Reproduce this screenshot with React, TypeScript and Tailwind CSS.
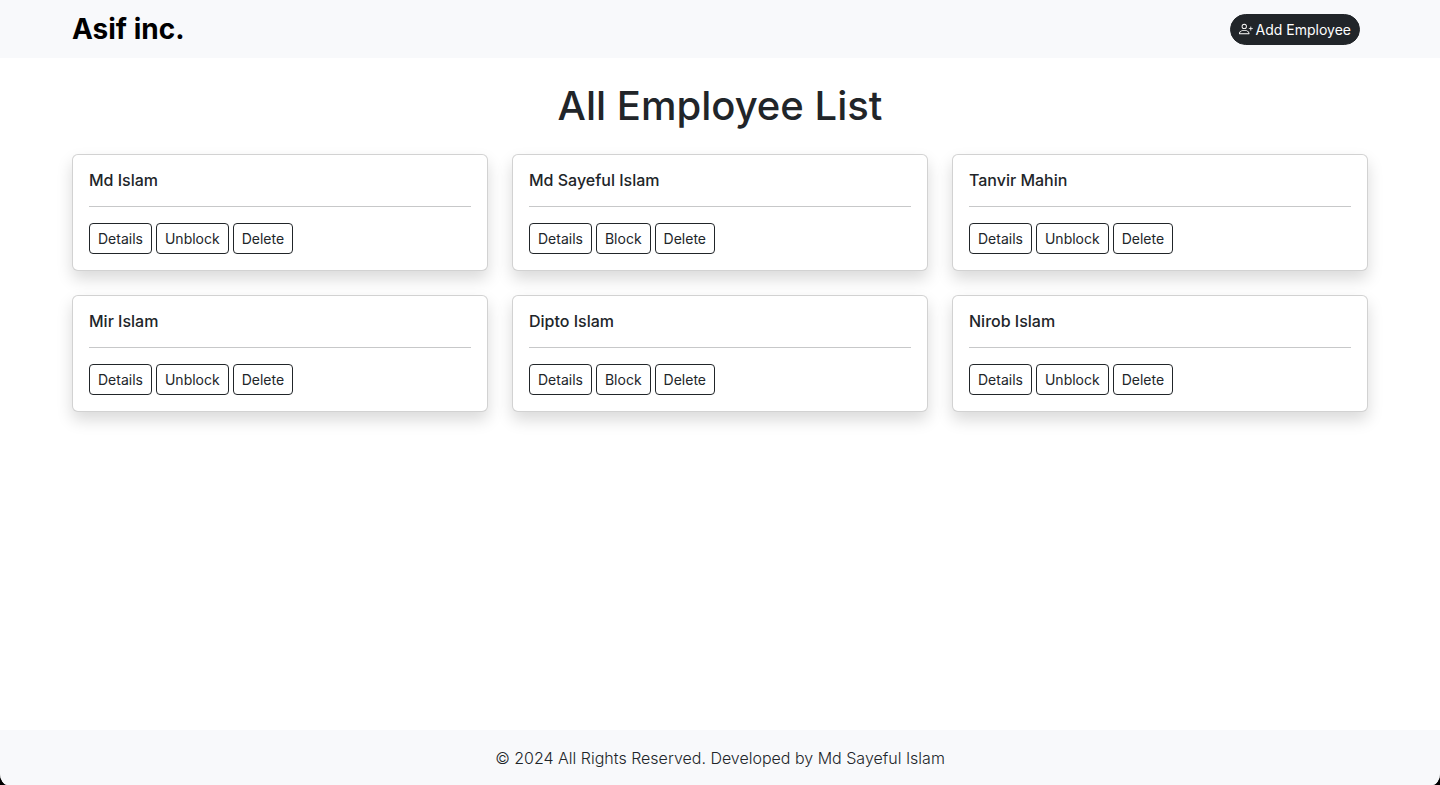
import { BsPersonPlus } from "react-icons/bs";

type Employee = { id: number; name: string; blocked: boolean };

const employees: Employee[] = [
  { id: 1, name: "Md Islam", blocked: true },
  { id: 2, name: "Md Sayeful Islam", blocked: false },
  { id: 3, name: "Tanvir Mahin", blocked: true },
  { id: 4, name: "Mir Islam", blocked: true },
  { id: 5, name: "Dipto Islam", blocked: false },
  { id: 6, name: "Nirob Islam", blocked: true },
];

function ActionButton({ label }: { label: string }) {
  return (
    <button
      type="button"
      className="rounded-sm border border-[#212529] px-2 py-1 text-sm leading-[21px] hover:bg-[#212529] hover:text-white"
    >
      {label}
    </button>
  );
}

function EmployeeCard({ employee }: { employee: Employee }) {
  return (
    <article className="rounded-md border border-black/[.175] bg-white p-4 shadow-[0_8px_16px_rgba(0,0,0,0.15)]">
      <h2 className="text-base leading-[19px] font-medium">{employee.name}</h2>
      <hr className="my-4 border-[#212529]/25" />
      <div className="flex flex-wrap gap-1">
        <ActionButton label="Details" />
        <ActionButton label={employee.blocked ? "Unblock" : "Block"} />
        <ActionButton label="Delete" />
      </div>
    </article>
  );
}

export default function App() {
  return (
    <div className="bg-black font-['Inter',sans-serif] text-[#212529]">
      <div className="flex min-h-screen flex-col overflow-hidden rounded-b-[8px_12px] bg-white">
        <header className="bg-[#f8f9fb]">
          <div className="mx-auto flex h-[58px] max-w-[1320px] items-center justify-between pr-5 pl-3">
            <a href="#" className="text-[28px] leading-[42px] font-bold text-black">
              Asif inc.
            </a>
            <button
              type="button"
              className="flex items-center gap-[3px] rounded-full border border-[#212529] bg-[#212529] px-2 py-1 text-sm leading-[21px] text-white"
            >
              <BsPersonPlus size={14} aria-hidden="true" />
              Add Employee
            </button>
          </div>
        </header>

        <main className="mx-auto w-full max-w-[1320px] flex-1 px-3 py-6">
          <h1 className="mb-6 text-center text-[40px] leading-[48px] font-medium">All Employee List</h1>
          <div className="grid grid-cols-1 gap-6 md:grid-cols-2 lg:grid-cols-3">
            {employees.map((employee) => (
              <EmployeeCard key={employee.id} employee={employee} />
            ))}
          </div>
        </main>

        <footer className="bg-[#f8f9fb] px-3 pt-4 pb-[15px] text-center">
          <p className="text-base leading-6 font-light">© 2024 All Rights Reserved. Developed by Md Sayeful Islam</p>
        </footer>
      </div>
    </div>
  );
}
